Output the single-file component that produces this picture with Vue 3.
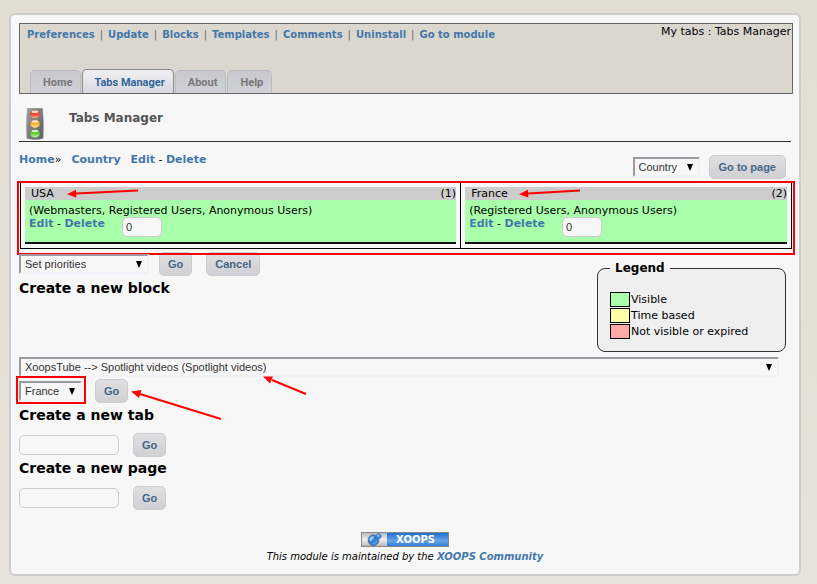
<script setup>
import { ref } from 'vue'

const moduleLinks = ['Preferences', 'Update', 'Blocks', 'Templates', 'Comments', 'Uninstall', 'Go to module']
const tabs = ['Home', 'Tabs Manager', 'About', 'Help']
const current = 'Tabs Manager'
const blocks = ref([
  { name: 'USA', order: 1, groups: 'Webmasters, Registered Users, Anonymous Users', priority: '0' },
  { name: 'France', order: 2, groups: 'Registered Users, Anonymous Users', priority: '0' }
])
const legend = [
  { label: 'Visible', kind: 'visible' },
  { label: 'Time based', kind: 'timed' },
  { label: 'Not visible or expired', kind: 'expired' }
]
const creators = [
  { id: 'tab', title: 'Create a new tab' },
  { id: 'page', title: 'Create a new page' }
]
</script>

<template>
  <main class="panel">
    <header class="top">
      <div class="top-row">
        <nav class="module-nav">
          <template v-for="(l, i) in moduleLinks" :key="l">
            <span v-if="i" class="sep">|</span><a href="#">{{ l }}</a>
          </template>
        </nav>
        <span class="path">My tabs : Tabs Manager</span>
      </div>
      <nav class="tabs">
        <a v-for="t in tabs" :key="t" href="#" class="tab" :class="{ active: t === current }">{{ t }}</a>
      </nav>
    </header>

    <div class="title-row">
      <svg class="light" viewBox="0 0 18 32" aria-hidden="true">
        <defs>
          <linearGradient id="case" x1="0" y1="0" x2="1" y2="1">
            <stop offset="0" stop-color="#a2a2a2" /><stop offset=".5" stop-color="#7d7d7d" /><stop offset="1" stop-color="#5c5c5c" />
          </linearGradient>
          <linearGradient id="red" x1="0" y1="0" x2="0" y2="1">
            <stop offset="0" stop-color="#d8543c" /><stop offset=".5" stop-color="#f04428" /><stop offset="1" stop-color="#ffb9a4" />
          </linearGradient>
          <linearGradient id="amber" x1="0" y1="0" x2="0" y2="1">
            <stop offset="0" stop-color="#d89c34" /><stop offset=".5" stop-color="#f8b42c" /><stop offset="1" stop-color="#fff0a8" />
          </linearGradient>
          <linearGradient id="green" x1="0" y1="0" x2="0" y2="1">
            <stop offset="0" stop-color="#4ca430" /><stop offset=".5" stop-color="#5fd22c" /><stop offset="1" stop-color="#d2ffa0" />
          </linearGradient>
        </defs>
        <path d="M1.5 0.5Q9-.3 16.5.5Q18 15 17 30.5Q9 32.5 1 30.5Q0 15 1.5.5Z" fill="url(#case)" stroke="#8a8a8a" stroke-width=".6" />
        <g stroke="#777" stroke-width=".6">
          <ellipse cx="9" cy="6.3" rx="5" ry="4.2" fill="url(#red)" />
          <ellipse cx="9" cy="15.9" rx="5" ry="4.2" fill="url(#amber)" />
          <ellipse cx="9" cy="25.5" rx="5" ry="4.2" fill="url(#green)" />
        </g>
        <g fill="#fff" opacity=".75">
          <ellipse cx="9" cy="3.8" rx="3.4" ry="1.2" />
          <ellipse cx="9" cy="13.4" rx="3.4" ry="1.2" />
          <ellipse cx="9" cy="23" rx="3.4" ry="1.2" />
        </g>
      </svg>
      <h1>Tabs Manager</h1>
    </div>

    <div class="crumb-row">
      <div class="crumbs">
        <a href="#">Home</a>»<a href="#" class="place">Country</a><a href="#" class="edit">Edit</a> - <a href="#">Delete</a>
      </div>
      <form class="jump" @submit.prevent>
        <span class="pick"><select aria-label="Page"><option>Country</option></select></span>
        <button>Go to page</button>
      </form>
    </div>

    <section class="blocks">
      <div v-for="b in blocks" :key="b.name" class="cell">
        <div class="block">
          <div class="block-head"><span>{{ b.name }}</span><span>({{ b.order }})</span></div>
          <div class="block-body">
            <div>({{ b.groups }})</div>
            <div class="block-tools">
              <span><a href="#">Edit</a> - <a href="#">Delete</a></span>
              <input v-model="b.priority" class="priority" :aria-label="'Priority of ' + b.name">
            </div>
          </div>
        </div>
        <svg class="arrow arrow-name" :class="'n' + b.order" :viewBox="b.order === 1 ? '0 0 74 12' : '0 0 64 12'" aria-hidden="true">
          <path :d="b.order === 1 ? 'M10 6.5L72 3.5' : 'M10 6.5L62 3.5'" /><path class="tip" d="M1 7.2L10 2.8L10.3 10.6Z" />
        </svg>
      </div>
      <div class="mark mark-blocks"></div>
    </section>

    <div class="middle">
      <div>
        <form class="controls" @submit.prevent>
          <span class="pick wide"><select aria-label="Action"><option>Set priorities</option></select></span>
          <button>Go</button>
          <button type="button" class="cancel">Cancel</button>
        </form>
        <h2>Create a new block</h2>
      </div>
      <fieldset class="legend">
        <legend>Legend</legend>
        <div v-for="l in legend" :key="l.kind" class="key"><i :class="l.kind"></i>{{ l.label }}</div>
      </fieldset>
    </div>

    <form class="new-block" @submit.prevent>
      <span class="pick full"><select aria-label="Block"><option>XoopsTube --&gt; Spotlight videos (Spotlight videos)</option></select></span>
      <svg class="arrow arrow-video" viewBox="0 0 46 22" aria-hidden="true">
        <path d="M10 6L44 20" /><path class="tip" d="M1 2.5L11 2.5L8 9.5Z" />
      </svg>
      <div class="controls target">
        <span class="pick country"><select aria-label="Tab"><option>France</option></select></span>
        <button class="add">Go</button>
        <div class="mark mark-tab"></div>
        <svg class="arrow arrow-go" viewBox="0 0 94 32" aria-hidden="true">
          <path d="M10 5L91 30" /><path class="tip" d="M1 2.5L11.5 1L9 9Z" />
        </svg>
      </div>
    </form>

    <form v-for="c in creators" :key="c.id" class="creator" @submit.prevent>
      <h2><label :for="c.id">{{ c.title }}</label></h2>
      <div class="controls">
        <input :id="c.id" class="name">
        <button>Go</button>
      </div>
    </form>

    <footer>
      <a href="#" aria-label="XOOPS" class="badge">
        <svg viewBox="0 0 25 13" class="ball" aria-hidden="true">
          <circle cx="11.5" cy="7.2" r="5.5" fill="#2f7fd6" stroke="#4a5a70" stroke-width=".5" />
          <path d="M7.2 6.5Q8 3.2 11.5 3.2Q12.5 6 8.5 8.4Z" fill="#9ccaf4" />
          <path d="M10.5 10.5Q14 10.5 15 7.5" fill="none" stroke="#5aa2ea" stroke-width="1.4" />
          <circle cx="16.6" cy="3.2" r="2.6" fill="#3d8ce2" stroke="#5a6f8c" stroke-width=".5" />
          <circle cx="16" cy="2.7" r="1" fill="#a5d0f7" />
        </svg>
        <span>XOOPS</span>
      </a>
      <p>This module is maintained by the <a href="#">XOOPS Community</a></p>
    </footer>
  </main>
</template>

<style>
body {
  margin: 0;
  background: linear-gradient(#e0ded2, #e6e3da);
}
</style>

<style scoped>
* { box-sizing: border-box; }
.panel {
  margin: 13px 16px 9px 9px;
  padding: 8px 6px 11px 8px;
  border: 2px solid #ccc;
  border-radius: 6px;
  background: #f7f7f7;
  color: #000;
  font: 11px/13px "DejaVu Sans", sans-serif;
}
a { color: #4477aa; font-weight: bold; text-decoration: none; }
h1, h2, p { margin: 0; }
.top {
  display: flex;
  flex-direction: column;
  justify-content: space-between;
  height: 71px;
  border: 1px solid #666;
  background: #dad7cf;
}
.top-row { display: flex; justify-content: space-between; }
.module-nav { padding: 4px 0 0 7px; font-size: 10px; white-space: nowrap; }
.sep { margin: 0 5px; color: #666; }
.path { padding: 1px 1px 0 0; }
.tabs { display: flex; align-items: flex-end; gap: 1px; padding-left: 10px; }
.tab {
  height: 23px;
  padding: 0 8px 0 12px;
  border: 1px solid #bbb;
  border-bottom: 0;
  border-radius: 5px 5px 0 0;
  background: linear-gradient(#c8c9cd, #d0d1d5);
  color: #777;
  font: bold 11px/24px Roboto, sans-serif;
}
.tab.active {
  height: 24px;
  padding-left: 11px;
  border-color: #888;
  background: linear-gradient(#f0f0f2, #d8dae0);
  color: #336699;
  line-height: 26px;
}
.title-row {
  display: flex;
  gap: 25px;
  height: 48px;
  margin-right: 2px;
  padding: 14px 0 0 7px;
  border-bottom: 1px solid #333;
}
.light { width: 18px; height: 32px; }
h1 { padding-top: 2px; color: #555; font-size: 12px; line-height: 16px; }
.crumb-row {
  display: flex;
  justify-content: space-between;
  padding: 11px 7px 0 0;
}
.crumbs { white-space: pre; }
.place { margin: 0 10px; }
.jump { display: flex; align-items: center; gap: 9px; padding-top: 2px; }
.jump button { padding: 0 9px; }
.pick { position: relative; display: block; width: 67px; height: 20px; }
.pick::after {
  content: "";
  position: absolute;
  top: 7px;
  right: 7px;
  border: 3px solid transparent;
  border-top: 7px solid #000;
  border-bottom: 0;
  pointer-events: none;
}
select {
  appearance: none;
  width: 100%;
  height: 20px;
  padding: 0 4px;
  border: 2px solid #f1f1f8;
  border-top-color: #9a9aa0;
  border-left-color: #9a9aa0;
  border-radius: 0;
  background: #f7f7f7;
  color: #333;
  font: 11px "Liberation Sans", sans-serif;
}
button {
  height: 24px;
  padding: 0 8px;
  border: 1px solid #ccc;
  border-radius: 5px;
  background: linear-gradient(#e0e0e2, #d0d0d5);
  color: #446688;
  font: bold 11px "Liberation Sans", sans-serif;
}
input {
  height: 20px;
  padding: 0 3px;
  border: 1px solid #ccc;
  border-radius: 5px;
  background: #f7f7f7;
  color: #333;
  font: 11px "Liberation Sans", sans-serif;
}
.blocks {
  position: relative;
  display: flex;
  height: 67px;
  margin: 3px 1px 0;
}
.cell {
  position: relative;
  flex: 330 1 0;
  min-width: 0;
  padding: 4px;
  border: solid #000;
  border-width: 1px 1px 1px 0;
}
.cell:first-child { flex-grow: 442; border-left-width: 1px; }
.block { background: #aaffaa; border-bottom: 2px solid #111; }
.block-head {
  display: flex;
  justify-content: space-between;
  padding-left: 6px;
  background: #ccc;
}
.block-body { height: 42px; padding: 4px 0 0 4px; }
.block-tools { display: flex; gap: 17px; }
.priority { width: 40px; }
.mark { position: absolute; border: 2px solid #f00; }
.mark-blocks { inset: -1px -3px -6px; }
.arrow { position: absolute; fill: none; stroke: #f00; stroke-width: 2; }
.tip { fill: #f00; stroke: none; }
.arrow-name { top: 4px; left: 45px; width: 74px; height: 12px; }
.arrow-name.n2 { left: 57px; width: 64px; }
.middle { display: flex; justify-content: space-between; padding-right: 7px; }
.controls { display: flex; align-items: center; }
.middle .controls { padding: 3px 0 1px; gap: 10px; }
.wide { width: 130px; }
.middle .cancel { margin-left: 4px; }
h2 { font-size: 14px; line-height: 23px; }
.legend {
  width: 189px;
  height: 91px;
  margin: 12px 0 0;
  padding: 17px 12px 0;
  border: 1px solid #333;
  border-radius: 8px;
  background: #efefef;
}
.legend legend { padding: 0 5px; font-size: 12px; line-height: 14px; font-weight: bold; }
.key { display: flex; gap: 1px; line-height: 16px; }
.key i { width: 20px; height: 15px; border: 1px solid #000; }
.visible { background: #aaffaa; }
.timed { background: #ffffaa; }
.expired { background: #ffaaaa; }
.new-block { position: relative; padding: 5px 0 1px; }
.full { width: auto; margin-right: 14px; }
.arrow-video { top: 22px; left: 243px; width: 46px; height: 22px; }
.target { position: relative; gap: 13px; padding-top: 2px; }
.country { width: 63px; }
.mark-tab { top: -1px; left: -3px; width: 70px; height: 28px; }
.arrow-go { top: 12px; left: 111px; width: 94px; height: 32px; }
.creator .controls { gap: 14px; padding: 6px 0 0; }
.name { width: 100px; }
footer { padding: 22px 2px 0 0; text-align: center; font-size: 10px; font-style: italic; }
.badge {
  display: inline-flex;
  width: 88px;
  height: 15px;
  border: 1px solid #888;
  background: linear-gradient(#bbb, #eee 50%, #bbb);
  vertical-align: top;
}
.ball { width: 25px; height: 13px; }
.badge span {
  flex: 1;
  padding-right: 4px;
  background: linear-gradient(#1d6fd0, #6aa5e8 60%, #2c7cd8);
  color: #fff;
  font-size: 10px;
  font-style: normal;
}
footer p { padding-top: 3px; }
</style>
